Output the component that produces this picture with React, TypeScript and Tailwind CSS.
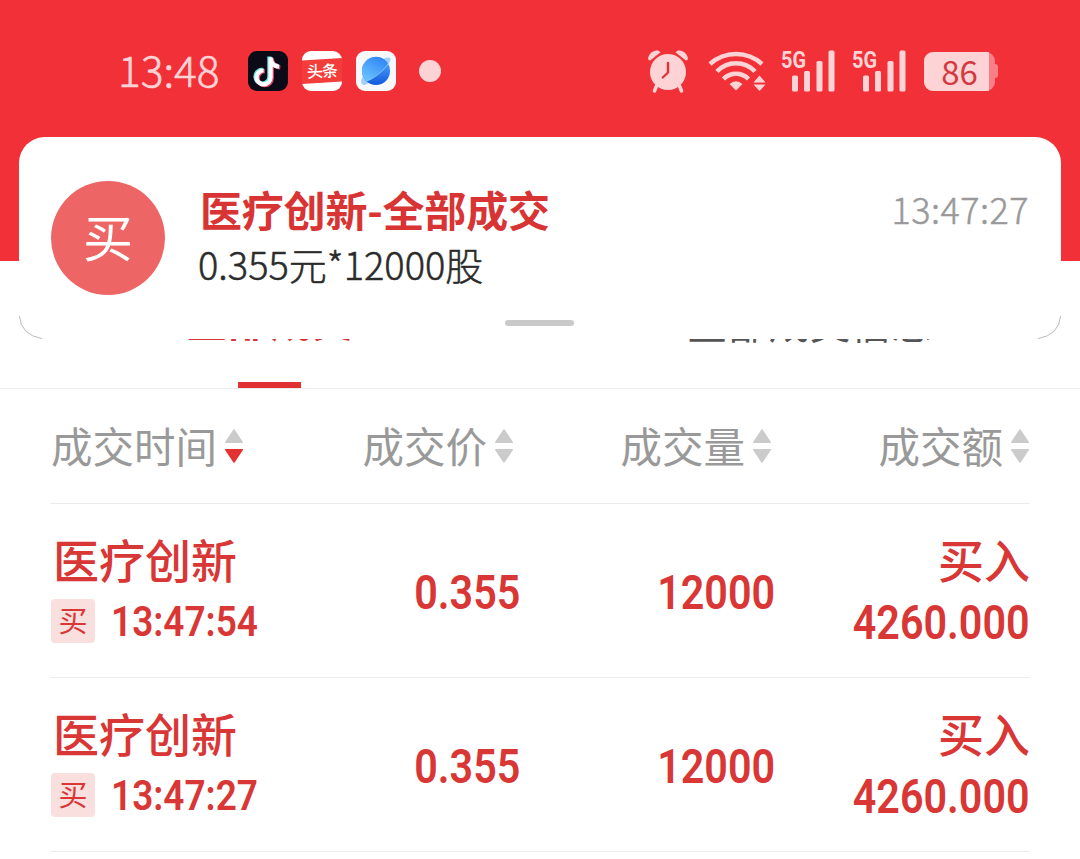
import React from "react";

const orders = [
  { name: "医疗创新", time: "13:47:54", price: "0.355", volume: "12000", side: "买入", amount: "4260.000" },
  { name: "医疗创新", time: "13:47:27", price: "0.355", volume: "12000", side: "买入", amount: "4260.000" },
];

const TikTokIcon = () => {
  const note = "M22 5v20.200a7 7 0 1 1-7-7M22 6c.6 5 3.500 8 8.500 8.500";
  return (
    <svg width="40" height="40" viewBox="0 0 40 40" fill="none" strokeWidth="4.200">
      <rect width="40" height="40" rx="9" fill="#0b0a16" />
      <path d={note} stroke="#5fe3e0" transform="translate(-0.6 0.4)" />
      <path d={note} stroke="#e0486b" transform="translate(1.8 2)" />
      <path d={note} stroke="#fff" transform="translate(0.6 1.2)" />
    </svg>
  );
};

const ToutiaoIcon = () => (
  <svg width="40" height="40" viewBox="0 0 40 40">
    <rect width="40" height="40" rx="9" fill="#fff" />
    <path d="M0 9.500L40 7v23.500L0 33z" fill="#f23d3b" />
    <text
      x="5"
      y="26"
      fontSize="16"
      fontWeight="500"
      fill="#fff"
      textLength="31"
      fontFamily="Noto Sans CJK SC, sans-serif"
      transform="rotate(-3 20 20)"
    >
      头条
    </text>
  </svg>
);

const PlanetIcon = () => (
  <svg width="40" height="40" viewBox="0 0 40 40">
    <defs>
      <linearGradient id="planet" x1="0.6" y1="0.2" x2="0.6" y2="1">
        <stop offset="0" stopColor="#4aa0fa" />
        <stop offset="1" stopColor="#1258dc" />
      </linearGradient>
      <linearGradient id="shine" x1="0.2" y1="1" x2="0.8" y2="0">
        <stop offset="0" stopColor="#6cc4ff" />
        <stop offset="1" stopColor="#2f83f4" />
      </linearGradient>
    </defs>
    <rect width="40" height="40" rx="9" fill="#f7f8fb" />
    <path d="M7 25C4 30 5 34 8 34 14 33 34 16 34.500 8.500 34.500 5.500 31 6 27 8z" fill="#9fd2fb" />
    <circle cx="20" cy="20" r="14" fill="url(#planet)" />
    <path d="M10.500 30.200A14 14 0 1 1 32 12.800C27 20 18 27.500 10.500 30.200z" fill="url(#shine)" />
    <path d="M11 30C19 27 28 19.500 32.200 12.500" fill="none" stroke="#9ad4ff" strokeWidth="1" opacity=".7" />
  </svg>
);

const AlarmIcon = () => (
  <svg width="43" height="44" viewBox="0 0 43 44" fill="#fdd3d6">
    <path d="M3.200 11.500C.5 11.500.6 8 3 5 6 1.500 11 .3 13.500 3.200z" />
    <path d="M38.800 11.500c2.700 0 2.600-3.500.2-6.500C36 1.500 31 .3 28.500 3.200z" />
    <path d="M9.500 37l-2 5M32.500 37l2 5" stroke="#fdd3d6" strokeWidth="3.500" strokeLinecap="round" />
    <circle cx="21" cy="23" r="18" />
    <path
      d="M21 14v9.500l-5.200 5"
      fill="none"
      stroke="#e0323a"
      strokeWidth="2.400"
      strokeLinecap="round"
      strokeLinejoin="round"
    />
  </svg>
);

const WifiIcon = () => (
  <svg width="59" height="44" viewBox="0 0 59 44" fill="none" stroke="#fdd3d6" strokeWidth="4.600">
    <path d="M2 15A38.800 38.800 0 0 1 54 15" />
    <path d="M9 22.500A26 26 0 0 1 47 22.500" />
    <path d="M15.500 30A17.500 17.500 0 0 1 40.500 30" />
    <path d="M21.500 35q6.500-5.500 13 0l-6.500 6.500z" fill="#fdd3d6" stroke="none" />
    <path d="M51.500 26.500l6 7h-12zM51.500 42l6-6.500h-12z" fill="#fdd3d6" stroke="none" />
  </svg>
);

const SignalIcon = () => (
  <svg width="54" height="44" viewBox="0 0 54 44" fill="#fdd3d6" className="overflow-visible">
    <text x="0" y="18.500" fontSize="23" fontWeight="700" textLength="25" lengthAdjust="spacingAndGlyphs" fontFamily="Roboto, sans-serif">
      5G
    </text>
    <rect x="11" y="26.500" width="6" height="16" rx="1.500" />
    <rect x="23" y="22" width="6" height="20.500" rx="1.500" />
    <rect x="35.500" y="12" width="6" height="30.500" rx="1.500" />
    <rect x="47.500" y="1.500" width="6" height="41" rx="1.500" />
  </svg>
);

const Battery = () => (
  <div className="flex items-center">
    <div className="flex h-[39px] w-[71px] rounded-[9px] bg-[#f77f85]">
      <div className="flex w-[65px] items-center justify-center rounded-l-[9px] bg-[#fdd3d6] pl-1.5 text-[33px] leading-[39px] text-[#d23a40]">
        86
      </div>
    </div>
    <div className="h-3.5 w-[3px] rounded-r bg-[#f77f85]" />
  </div>
);

const StatusBar = () => (
  <div className="flex h-[142px] items-center justify-between pr-[82px] pl-[118px]">
    <div className="flex items-center">
      <span className="w-[130px] pb-1 text-[42.500px] leading-none font-light text-[#fdd3d6] [-webkit-text-stroke:0.6px]">
        13:48
      </span>
      <div className="flex gap-3.5">
        <TikTokIcon />
        <ToutiaoIcon />
        <PlanetIcon />
      </div>
      <div className="ml-[23px] size-[22px] rounded-full bg-[#fdd3d6]" />
    </div>
    <div className="flex items-center">
      <AlarmIcon />
      <div className="w-[18px]" />
      <WifiIcon />
      <div className="w-3.5" />
      <SignalIcon />
      <div className="w-[17px]" />
      <SignalIcon />
      <div className="w-[18px]" />
      <Battery />
    </div>
  </div>
);

const Notification = () => (
  <div className="absolute top-[137px] left-[19px] h-[202px] w-[1042px] rounded-[26px] bg-white">
    <div className="flex px-8 pt-11">
      <div className="flex size-[114px] items-center justify-center rounded-full bg-[#ed6665] pb-1.5 text-[50px] text-white">
        买
      </div>
      <div className="ml-[33px] flex-1">
        <div className="flex h-[54px] items-center justify-between">
          <span className="pl-[2px] text-[42px] font-bold tracking-[-0.2px] text-[#d93434]">医疗创新-全部成交</span>
          <span className="text-[36px] font-light tracking-[0.5px] text-[#999] [-webkit-text-stroke:0.5px]">
            13:47:27
          </span>
        </div>
        <div className="flex h-[56px] items-center text-[38px] font-light text-[#2b2b2b] [-webkit-text-stroke:0.5px]">
          0.355元*12000股
        </div>
      </div>
    </div>
    <div className="mt-[25px] ml-[486px] h-1.5 w-[69px] rounded-full bg-[#c9c9c9]" />
    <svg className="absolute bottom-0 left-0" width="24" height="24" fill="none" stroke="#aaa" strokeWidth="0.8">
      <path d="M.4 1Q2 20 23 23.600" />
    </svg>
    <svg className="absolute right-0 bottom-0" width="24" height="24" fill="none" stroke="#aaa" strokeWidth="0.8">
      <path d="M23.600 1Q22 20 1 23.600" />
    </svg>
  </div>
);

const Tabs = () => (
  <div className="flex h-32 border-b border-[#ececec]">
    <div className="flex w-[539px] flex-col items-center justify-end">
      <span className="h-[87px] text-[42px] leading-[48px] font-bold text-[#d93434]">全部成交</span>
      <div className="h-1.5 w-[63px] bg-[#e03232]" />
    </div>
    <div className="flex w-[541px] flex-col items-center justify-end">
      <span className="h-[91px] text-[41px] leading-[48px] text-[#555]">全部成交信息</span>
    </div>
  </div>
);

const SortIcon = ({ desc = false }: { desc?: boolean }) => (
  <svg width="20" height="36" viewBox="0 0 20 36" strokeLinejoin="round" strokeWidth="1.500">
    <path d="M10 2l8.300 12.300H1.700z" fill="#cbcbcb" stroke="#cbcbcb" />
    <path d="M10 34l8.300-12.300H1.700z" fill={desc ? "#e43131" : "#cbcbcb"} stroke={desc ? "#e43131" : "#cbcbcb"} />
  </svg>
);

const HeadCell = ({ label, desc }: { label: string; desc?: boolean }) => (
  <div className="flex items-center justify-end gap-[7px]">
    <span className="pb-0.5 text-[41.500px] text-[#999]">{label}</span>
    <SortIcon desc={desc} />
  </div>
);

// Condensed digits, squeezed towards the side they are aligned to
const Digits = ({ children, left }: { children: string; left?: boolean }) => (
  <span
    className={
      left
        ? "block origin-left scale-x-[0.86] font-[Roboto] text-[43px] leading-none font-semibold"
        : "block origin-right scale-x-[0.86] font-[Roboto] text-[48px] leading-none font-semibold"
    }
  >
    {children}
  </span>
);

const grid = "grid grid-cols-[194px_270px_258px_258px] border-b border-[#ececec]";

const App = () => {
  return (
    <div className="relative h-[859px] w-[1080px] overflow-hidden bg-white font-['Noto_Sans_CJK_SC',sans-serif]">
      <div className="h-[261px] bg-[#f13038]">
        <StatusBar />
      </div>
      <Tabs />
      <div className="px-[50px]">
        <div className={`${grid} h-[115px]`}>
          <HeadCell label="成交时间" desc />
          <HeadCell label="成交价" />
          <HeadCell label="成交量" />
          <HeadCell label="成交额" />
        </div>
        {orders.map((order) => (
          <div key={order.time} className={`${grid} h-[174px] text-[#d93636]`}>
            <div className="pt-6 whitespace-nowrap">
              <div className="h-[64px] pl-[3px] text-[46px] leading-[60px] font-medium">{order.name}</div>
              <div className="flex h-[58px] items-center pl-px">
                <span className="mr-4 flex size-11 shrink-0 items-center justify-center rounded bg-[#fadfdf] pb-0.5 text-[29px]">
                  买
                </span>
                <Digits left>{order.time}</Digits>
              </div>
            </div>
            <div className="-mr-1.5 flex items-center justify-end pt-1">
              <Digits>{order.price}</Digits>
            </div>
            <div className="-mr-[3px] flex items-center justify-end pt-1">
              <Digits>{order.volume}</Digits>
            </div>
            <div className="flex flex-col items-end pt-6">
              <div className="h-[66px] text-[46px] leading-[60px] font-medium">{order.side}</div>
              <div className="flex h-[58px] items-center">
                <Digits>{order.amount}</Digits>
              </div>
            </div>
          </div>
        ))}
      </div>
      <Notification />
    </div>
  );
};

export default App;
